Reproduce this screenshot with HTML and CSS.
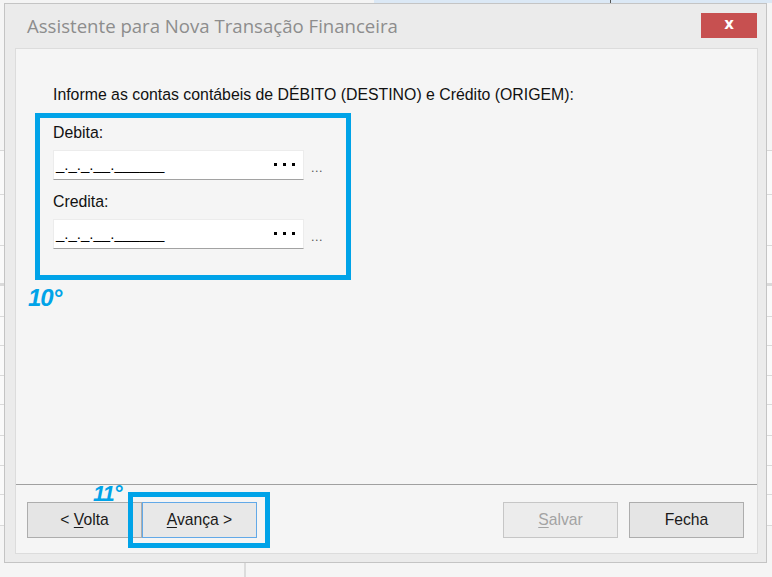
FILE: index.html
```html
<!DOCTYPE html>
<html lang="pt-BR">
<head>
<meta charset="utf-8">
<title>Assistente para Nova Transação Financeira</title>
<link rel="stylesheet" href="styles.css">
</head>
<body>
<div class="app">
  <div class="app-top"><span class="app-tick"></span></div>
  <div class="app-head"></div>
  <div class="app-row r44"></div>
  <div class="app-row r51"></div>
  <div class="app-row r40"></div>
  <div class="app-row r31"></div>
  <div class="app-row r29"></div>
  <div class="app-row r30"></div>
  <div class="app-row r29"></div>
  <div class="app-row r31"></div>
  <div class="app-row r30"></div>
  <div class="app-row r29"></div>
  <div class="app-row r31"></div>
  <div class="app-foot"></div>
</div>

<div class="dialog">
  <div class="titlebar">
    <div class="title">Assistente para Nova Transação Financeira</div>
    <div class="close">x</div>
  </div>
  <div class="client">
    <div class="content">
      <p class="intro">Informe as contas contábeis de DÉBITO (DESTINO) e Crédito (ORIGEM):</p>
      <div class="mark-box">
        <div class="label">Debita:</div>
        <div class="field-row">
          <div class="field">
            <span class="mask">_._._.__.______</span>
            <svg class="dots" width="22" height="4" viewBox="0 0 22 4"><rect x="0" y="0" width="3" height="3"/><rect x="9" y="0" width="3" height="3"/><rect x="18" y="0" width="3" height="3"/></svg>
          </div>
          <span class="ellipsis">...</span>
        </div>
        <div class="label label-2">Credita:</div>
        <div class="field-row">
          <div class="field">
            <span class="mask">_._._.__.______</span>
            <svg class="dots" width="22" height="4" viewBox="0 0 22 4"><rect x="0" y="0" width="3" height="3"/><rect x="9" y="0" width="3" height="3"/><rect x="18" y="0" width="3" height="3"/></svg>
          </div>
          <span class="ellipsis">...</span>
        </div>
      </div>
      <div class="step">10°</div>
    </div>
    <div class="footer">
      <div class="step step-11">11°</div>
      <div class="mark-box-2"></div>
      <div class="nav">
        <button class="btn">&lt; <u>V</u>olta</button>
        <button class="btn btn-focus"><u>A</u>vança &gt;</button>
      </div>
      <div class="actions">
        <button class="btn btn-disabled"><u>S</u>alvar</button>
        <button class="btn">Fecha</button>
      </div>
    </div>
  </div>
</div>
</body>
</html>
```
FILE: styles.css
```css
* { box-sizing: border-box; }
html, body { margin: 0; padding: 0; }
body {
  width: 772px;
  height: 577px;
  overflow: hidden;
  position: relative;
  background: #f5f5f5;
  font-family: "Liberation Sans", Arial, sans-serif;
}

/* background application */
.app { height: 577px; display: flex; flex-direction: column; }
.app-top {
  height: 3px;
  position: relative;
  background: linear-gradient(to right, #f4f4f4 0 374px, #dbe8f5 374px);
}
.app-tick { position: absolute; left: 610px; top: 0; width: 1px; height: 3px; background: #555; }
.app-head { height: 148px; border-bottom: 1px solid #d8d8d8; }
.app-row { border-bottom: 1px solid #dadada; background: #fafafa; }
.r44 { height: 44px; }
.r51 { height: 51px; }
.r40 { height: 40px; border-bottom-width: 3px; }
.r30 { height: 30px; }
.r29 { height: 29px; }
.r31 { height: 31px; }
.app-foot {
  flex: 1;
  background: linear-gradient(to right, #f5f5f5 0 244px, #dcdcdc 244px 246px, #f5f5f5 246px);
}

/* dialog window */
.dialog {
  position: absolute;
  left: 4px;
  top: 3px;
  width: 763px;
  height: 560px;
  background: #ebebeb;
  border: 1px solid #c4c4c4;
  display: flex;
  flex-direction: column;
}
.titlebar {
  height: 44px;
  display: flex;
  justify-content: space-between;
  align-items: flex-start;
  padding: 9px 9px 0 22px;
}
.title {
  font-family: "Open Sans", "Noto Sans", sans-serif;
  font-size: 18.6px;
  line-height: 24px;
  color: #8d8d8d;
  margin-top: 1px;
}
.close {
  width: 56px;
  height: 25px;
  background: #c75050;
  color: #fff;
  font-family: "DejaVu Sans", sans-serif;
  font-weight: bold;
  font-size: 15px;
  line-height: 23px;
  text-align: center;
}

.client {
  margin: 0 8px 0 10px;
  height: 506px;
  background: #f5f5f5;
  border: 1px solid #dcdcdc;
  display: flex;
  flex-direction: column;
}
.content {
  flex: 1;
  padding: 37px 0 0 0;
  font-size: 15.85px;
  color: #111;
}
.intro {
  margin: 0 0 9px 37px;
  line-height: 18px;
}
.mark-box {
  margin-left: 19px;
  width: 316px;
  height: 167px;
  border: 5px solid #00a3e8;
  padding: 6px 0 0 13px;
}
.label { line-height: 18px; margin-bottom: 8px; }
.label-2 { margin-top: 13px; }
.field-row { display: flex; align-items: flex-end; }
.field {
  width: 251px;
  height: 30px;
  background: #fff;
  border: 1px solid #ececec;
  border-bottom: 1px solid #a2a2a2;
  display: flex;
  align-items: center;
  justify-content: space-between;
  padding: 0 7px 0 2px;
}
.mask {
  align-self: flex-end;
  font-size: 15px;
  line-height: 18px;
  padding-bottom: 5px;
  color: #000;
}
.dots { fill: #000; margin-top: -1px; }
.ellipsis {
  margin-left: 7px;
  font-size: 12.5px;
  line-height: 12px;
  padding-bottom: 6px;
  color: #555;
  letter-spacing: 0.5px;
}
.step {
  margin: 5px 0 0 12px;
  font-size: 24px;
  line-height: 26px;
  font-weight: bold;
  font-style: italic;
  color: #00a3e8;
  letter-spacing: -1px;
}

.footer {
  position: relative;
  height: 69px;
  border-top: 1px solid #a0a0a0;
  display: flex;
  justify-content: space-between;
  align-items: flex-start;
  padding: 17px 13px 0 11px;
}
.step-11 {
  position: absolute;
  left: 77px;
  top: -3px;
  margin: 0;
  font-size: 22px;
  line-height: 24px;
}
.mark-box-2 {
  position: absolute;
  left: 112px;
  top: 7px;
  width: 142px;
  height: 56px;
  border: 5px solid #00a3e8;
}
.nav, .actions { display: flex; }
.actions { gap: 11px; }
.btn {
  width: 115px;
  height: 36px;
  background: #e5e5e5;
  border: 1px solid #adadad;
  font-family: "Liberation Sans", Arial, sans-serif;
  font-size: 15.7px;
  color: #1a1a1a;
  padding: 0;
  margin: 0;
}
.btn u { text-decoration-thickness: 1px; text-underline-offset: 2px; }
.btn-focus {
  background: #e8e8e8;
  border-color: #62a9e8;
}
.btn-disabled {
  background: #ececec;
  border-color: #c6c6c6;
  color: #a3a3a3;
}
```
